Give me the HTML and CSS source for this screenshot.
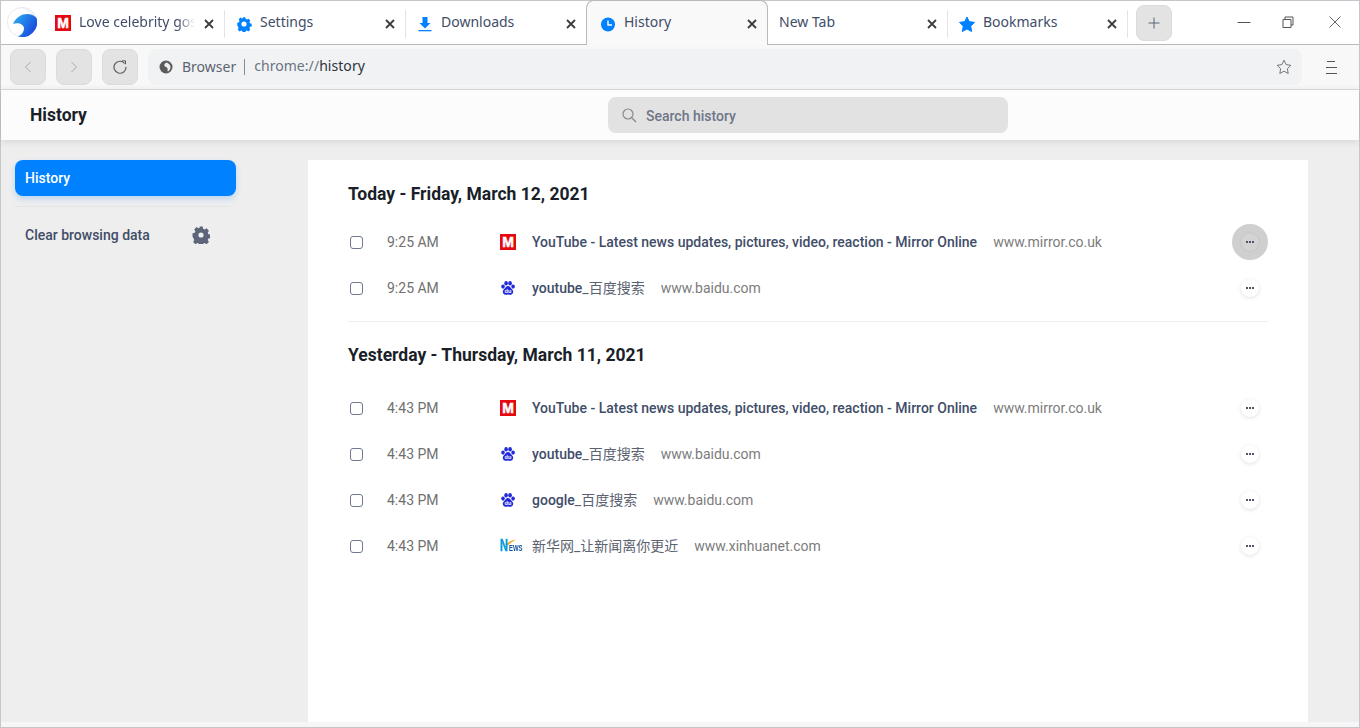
FILE: index.html
```html
<!doctype html>
<html>
<head>
<meta charset="utf-8">
<title>History</title>
<link rel="stylesheet" href="styles.css">
</head>
<body>
<div class="window">
	<div class="tabbar">
		<div class="logo">
			<svg width="30" height="30" viewBox="0 0 30 30">
				<defs>
					<radialGradient id="lg" cx="0.4" cy="0.5" r="0.6"><stop offset="0.7" stop-color="#fff"/><stop offset="1" stop-color="#e6e9f1"/></radialGradient>
					<linearGradient id="lb" x1="0" y1="0" x2="1" y2="0.6"><stop offset="0" stop-color="#2fb4f6"/><stop offset="1" stop-color="#1848dc"/></linearGradient>
				</defs>
				<circle cx="15" cy="15" r="14.600" fill="url(#lg)" stroke="#e2e5ed" stroke-width="0.800"/>
				<path d="M6 17C9 10 15 7 20 7C24 7 27 8.500 29.600 11A15 15 0 0 1 11 29.500C14 28.500 17 25 17 21.500C17 17 11 15 6 17Z" fill="url(#lb)"/>
			</svg>
		</div>
		<div class="tab">
			<span class="fav-mirror fav-left">M</span>
			<span class="tab-title tab-fade">Love celebrity gossip</span>
			<span class="tab-close"><svg width="10" height="10" viewBox="0 0 10 10"><path d="M1 1L9 9M9 1L1 9"/></svg></span>
		</div>
		<div class="tab">
			<svg class="fav" width="16" height="16" viewBox="0 0 16 16"><path d="M6.500 0.500h3l.4 2 1.300.6 1.800-1 2 2.100-1 1.800.6 1.300 1.900.4v3l-1.900.4-.6 1.300 1 1.800-2 2-1.800-1-1.300.6-.4 1.900h-3l-.4-1.900-1.300-.6-1.800 1-2-2 1-1.800-.6-1.300L.500 9.500v-3l1.900-.4.6-1.300-1-1.800 2-2.100 1.800 1 1.300-.6z" fill="#0081ff" transform="translate(0.800 0.800) scale(0.9)"/><circle cx="8" cy="8" r="2.600" fill="#fff"/></svg>
			<span class="tab-title">Settings</span>
			<span class="tab-close"><svg width="10" height="10" viewBox="0 0 10 10"><path d="M1 1L9 9M9 1L1 9"/></svg></span>
		</div>
		<div class="tab">
			<svg class="fav" width="16" height="16" viewBox="0 0 16 16"><path d="M5.500 1h5v6h3L8 12.500 2.500 7h3z" fill="#0081ff"/><rect x="1.500" y="14" width="13" height="1.300" fill="#0081ff"/></svg>
			<span class="tab-title">Downloads</span>
			<span class="tab-close"><svg width="10" height="10" viewBox="0 0 10 10"><path d="M1 1L9 9M9 1L1 9"/></svg></span>
		</div>
		<div class="tab tab-active">
			<svg class="fav" width="16" height="16" viewBox="0 0 16 16"><circle cx="8" cy="8.500" r="7" fill="#0081ff"/><path d="M8 4.500V9H12" fill="none" stroke="#fff" stroke-width="1.400"/></svg>
			<span class="tab-title">History</span>
			<span class="tab-close"><svg width="10" height="10" viewBox="0 0 10 10"><path d="M1 1L9 9M9 1L1 9"/></svg></span>
		</div>
		<div class="tab tab-narrow">
			<span class="tab-title">New Tab</span>
			<span class="tab-close"><svg width="10" height="10" viewBox="0 0 10 10"><path d="M1 1L9 9M9 1L1 9"/></svg></span>
		</div>
		<div class="tab tab-narrow">
			<svg class="fav" width="16" height="16" viewBox="0 0 16 16"><path d="M8 1l2.200 4.600 5.300.8-3.800 3.700 1 5.400L8 13l-4.700 2.500 1-5.400L.500 6.400l5.300-.8z" fill="#0081ff" stroke="#0081ff" stroke-linejoin="round"/></svg>
			<span class="tab-title">Bookmarks</span>
			<span class="tab-close"><svg width="10" height="10" viewBox="0 0 10 10"><path d="M1 1L9 9M9 1L1 9"/></svg></span>
		</div>
		<div class="new-tab">
			<svg width="12" height="12" viewBox="0 0 12 12"><path d="M6 0.500V11.500M0.500 6H11.500" stroke="#56657a" fill="none"/></svg>
		</div>
		<div class="win-btns">
			<svg width="14" height="14" viewBox="0 0 14 14"><path d="M0.500 7.500H13.500" stroke="#555" fill="none"/></svg>
			<svg width="12" height="12" viewBox="0 0 12 12"><path d="M1 3.500H9V11.500H1ZM3 3V1H11V9H9" stroke="#555" fill="none"/></svg>
			<svg class="win-close" width="12" height="12" viewBox="0 0 12 12"><path d="M0.500 0.500L11.500 11.500M11.500 0.500L0.500 11.500" stroke="#666" fill="none"/></svg>
		</div>
	</div>

	<div class="toolbar">
		<div class="nav-btn"><svg width="8" height="12" viewBox="0 0 8 12"><path d="M6.500 1L1.500 6L6.500 11" stroke="#a9a9a9" fill="none"/></svg></div>
		<div class="nav-btn"><svg width="8" height="12" viewBox="0 0 8 12"><path d="M1.500 1L6.500 6L1.500 11" stroke="#a9a9a9" fill="none"/></svg></div>
		<div class="nav-btn"><svg width="14" height="14" viewBox="0 0 14 14"><path d="M11.700 3.500A6 6 0 1 0 13 7" stroke="#5c5c5c" stroke-width="1.200" fill="none"/><path d="M9 0.800L12.500 0.800L12.500 4.300" stroke="#5c5c5c" fill="none"/></svg></div>
		<div class="address">
			<svg class="globe" width="14" height="14" viewBox="0 0 14 14"><circle cx="7" cy="7" r="6.500" fill="#5b5b5b"/><path d="M7.500 2.500C9.500 3 11.700 5 11.500 7.500C11.300 9.500 10 11 8.800 11.500C8 10 9.200 9.300 8.300 8C7.400 6.900 5.500 7 5.300 5.300C5.200 4 6.400 3 7.500 2.500Z" fill="#fff" opacity="0.9"/></svg>
			<span class="addr-label">Browser</span>
			<span class="addr-sep"></span>
			<span class="addr-url">chrome://<b>history</b></span>
			<svg class="addr-star" width="16" height="16" viewBox="0 0 16 16"><path d="M8 1.200l2.100 4.400 4.800.7-3.500 3.400.8 4.800L8 12.200l-4.200 2.300.8-4.800L1.100 6.300l4.800-.7z" stroke="#777" fill="none" stroke-linejoin="round"/></svg>
		</div>
		<div class="menu-btn"><span class="short"></span><span></span><span></span></div>
	</div>

	<div class="page-head">
		<div class="page-title">History</div>
		<div class="search">
			<svg width="15" height="15" viewBox="0 0 15 15"><circle cx="6" cy="6" r="5" stroke="#8a8a8a" stroke-width="1.200" fill="none"/><path d="M9.700 9.700L14 14" stroke="#8a8a8a" stroke-width="1.300"/></svg>
			<span class="search-text">Search history</span>
		</div>
	</div>

	<div class="body">
		<div class="side">
			<div class="side-active">History</div>
			<div class="side-line"></div>
			<div class="side-item">
				<span>Clear browsing data</span>
				<svg width="18" height="18" viewBox="0 0 16 16"><path d="M6.500 0.500h3l.4 2 1.300.6 1.800-1 2 2.100-1 1.800.6 1.300 1.900.4v3l-1.900.4-.6 1.300 1 1.800-2 2-1.800-1-1.300.6-.4 1.900h-3l-.4-1.900-1.300-.6-1.800 1-2-2 1-1.800-.6-1.300L.500 9.500v-3l1.900-.4.6-1.300-1-1.800 2-2.100 1.800 1 1.300-.6z" fill="#5d6579"/><circle cx="8" cy="8" r="2.300" fill="#eee"/></svg>
			</div>
		</div>

		<div class="card">
			<h2 class="day">Today - Friday, March 12, 2021</h2>
			<div class="rows">
				<div class="row">
					<span class="check"></span><span class="time">9:25 AM</span>
					<span class="fav-mirror">M</span>
					<span class="row-title">YouTube - Latest news updates, pictures, video, reaction - Mirror Online</span>
					<span class="row-url">www.mirror.co.uk</span>
					<span class="more-wrap more-hover"><span class="more"><i></i><i></i><i></i></span></span>
				</div>
				<div class="row">
					<span class="check"></span><span class="time">9:25 AM</span>
					<svg class="paw" width="16" height="16" viewBox="-0.500 -0.500 17 17"><use href="#paw"/></svg>
					<span class="row-title">youtube<em>_百度搜索</em></span>
					<span class="row-url">www.baidu.com</span>
					<span class="more-wrap"><span class="more"><i></i><i></i><i></i></span></span>
				</div>
			</div>
			<div class="day-line"></div>
			<h2 class="day day-next">Yesterday - Thursday, March 11, 2021</h2>
			<div class="rows rows-next">
				<div class="row">
					<span class="check"></span><span class="time">4:43 PM</span>
					<span class="fav-mirror">M</span>
					<span class="row-title">YouTube - Latest news updates, pictures, video, reaction - Mirror Online</span>
					<span class="row-url">www.mirror.co.uk</span>
					<span class="more-wrap"><span class="more"><i></i><i></i><i></i></span></span>
				</div>
				<div class="row">
					<span class="check"></span><span class="time">4:43 PM</span>
					<svg class="paw" width="16" height="16" viewBox="-0.500 -0.500 17 17"><use href="#paw"/></svg>
					<span class="row-title">youtube<em>_百度搜索</em></span>
					<span class="row-url">www.baidu.com</span>
					<span class="more-wrap"><span class="more"><i></i><i></i><i></i></span></span>
				</div>
				<div class="row">
					<span class="check"></span><span class="time">4:43 PM</span>
					<svg class="paw" width="16" height="16" viewBox="-0.500 -0.500 17 17"><use href="#paw"/></svg>
					<span class="row-title">google<em>_百度搜索</em></span>
					<span class="row-url">www.baidu.com</span>
					<span class="more-wrap"><span class="more"><i></i><i></i><i></i></span></span>
				</div>
				<div class="row">
					<span class="check"></span><span class="time">4:43 PM</span>
					<span class="fav-news"><svg class="news-arc" width="16" height="7" viewBox="0 0 16 7"><path d="M5 6C8 3 12 1 16 0.500C13 2.500 10 4 8 6.500Z" fill="#f5a623"/></svg><b>N</b><span>EWS</span></span>
					<span class="row-title"><em>新华网_让新闻离你更近</em></span>
					<span class="row-url">www.xinhuanet.com</span>
					<span class="more-wrap"><span class="more"><i></i><i></i><i></i></span></span>
				</div>
			</div>
		</div>
	</div>
	<div class="foot"></div>
</div>

<svg width="0" height="0" class="defs">
	<defs>
		<g id="paw" fill="#2229d8">
			<ellipse cx="2.700" cy="6.500" rx="1.900" ry="2.300"/>
			<ellipse cx="6" cy="3" rx="1.900" ry="2.400"/>
			<ellipse cx="10.200" cy="3" rx="1.900" ry="2.400"/>
			<ellipse cx="13.400" cy="6.500" rx="1.900" ry="2.300"/>
			<path d="M8 6C10 6 10.500 8 12.200 9.300C14.500 11 13.800 15.300 10.500 15.300C9.500 15.300 9 14.900 8 14.900C7 14.900 6.500 15.300 5.500 15.300C2.200 15.300 1.500 11 3.800 9.300C5.500 8 6 6 8 6Z"/>
			<text x="8" y="13.800" text-anchor="middle" fill="#fff" font-family="Liberation Sans" font-weight="700" font-size="6">du</text>
		</g>
	</defs>
</svg>
</body>
</html>
```

FILE: styles.css
```css
* {margin:0; padding:0; box-sizing:border-box;}

html, body {height:100%; overflow:hidden;}
body {font-family:"Roboto", "Noto Sans CJK SC", sans-serif; font-size:14px; color:#414d68; background:#eee;}

.defs {position:absolute;}

.window {height:728px; display:flex; flex-direction:column; border:1px solid #c3c6ca; background:#eee;}

/* tabs */
.tabbar {height:44px; flex:none; display:flex; align-items:stretch; background:#fff; border-bottom:1px solid #b9b9b9; font-family:"Noto Sans", "Noto Sans CJK SC", sans-serif;}
.logo {width:43px; flex:none; display:flex; align-items:center; padding:0 0 2px 6px;}

.tab {width:181px; flex:none; display:flex; align-items:center; padding:0 10px 0 11px; position:relative; color:#414d68;}
.tab::after {content:""; position:absolute; right:0; top:9px; width:1px; height:28px; background:#e3e3e3;}
.tab:nth-child(4)::after, .tab-active::after {display:none;}
.tab-active {width:182px; height:45px; margin:-1px 0 0 -1px; background:#f9f9f9; border:1px solid #b9b9b9; border-bottom:0; border-radius:8px 8px 0 0; padding:0 9px 0 13px;}
.tab-narrow {width:180px;}
.fav {flex:none; margin-right:8px; margin-top:2px;}
.tab-title {flex:1; min-width:0; white-space:nowrap; overflow:hidden; font-size:14px; line-height:20px; margin-top:-2px;}
.tab-fade {-webkit-mask-image:linear-gradient(to right, #000 85%, transparent 100%); mask-image:linear-gradient(to right, #000 85%, transparent 100%);}
.tab-close {width:12px; height:12px; flex:none; display:flex; align-items:center; justify-content:center; margin-left:8px; margin-top:2px;}
.tab-close svg path {stroke:#3c3c3c; stroke-width:1.800; fill:none;}

.new-tab {width:36px; height:36px; flex:none; align-self:center; margin-left:8px; background:#e3e3e3; border:1px solid #dcdcdc; border-radius:8px; display:flex; align-items:center; justify-content:center;}
.win-btns {flex:1; display:flex; align-items:center; justify-content:flex-end; gap:31px; padding:0 18px 0 0; margin-top:-1px;}
.win-close {margin-left:4px;}

/* toolbar */
.toolbar {height:45px; flex:none; display:flex; align-items:center; gap:10px; padding:0 9px 0 9px; background:#f8f8f8; border-bottom:1px solid #dedede;}
.nav-btn {width:36px; height:36px; flex:none; background:#e3e3e3; border:1px solid #dcdcdc; border-radius:8px; display:flex; align-items:center; justify-content:center;}
.address {width:1154px; height:36px; flex:none; background:#f1f2f4; border-radius:8px; display:flex; align-items:center; padding:0 10px 0 11px; font-family:"Noto Sans", sans-serif; font-size:14px; color:#5a6472;}
.globe {flex:none; margin-right:9px;}
.addr-label {color:#5c6470; margin-top:-2px;}
.addr-sep {width:1px; height:16px; background:#8a8a8a; margin:0 9px 0 8px;}
.addr-url {flex:1; color:#6b7280; letter-spacing:0.05px; margin-top:-4px;}
.addr-url b {font-weight:400; color:#2c3340;}
.addr-star {flex:none;}
.menu-btn {width:12px; margin-left:13px; display:flex; flex-direction:column; gap:5px; align-items:center;}
.menu-btn span {width:11px; height:1px; background:#555;}
.menu-btn .short {width:8px;}

/* page head */
.page-head {height:50px; flex:none; display:flex; align-items:center; background:#fcfcfc; box-shadow:0 1px 8px rgba(0,0,0,0.12); position:relative; padding-left:29px;}
.page-title {width:578px; flex:none; font-size:17.5px; font-weight:700; color:#1a1f29;}
.search {width:400px; height:36px; background:#e2e2e2; border-radius:8px; display:flex; align-items:center; gap:9px; padding-left:14px; font-weight:500; color:#6e7688;}
.search-text {margin-top:2px;}

/* body */
.body {flex:1; min-height:0; display:flex; padding-top:20px;}
.side {width:307px; flex:none; padding-left:14px;}
.side-active {width:221px; height:36px; background:#0081ff; border-radius:8px; color:#fff; font-weight:500; line-height:36px; padding-left:10px; box-shadow:0 3px 6px rgba(0,129,255,0.22);}
.side-line {width:214px; height:1px; background:#e4e4e4; margin-top:10px;}
.side-item {width:195px; height:36px; margin-top:10px; display:flex; align-items:center; justify-content:space-between; padding-left:10px; font-weight:500; color:#414d68;}

.card {width:1000px; flex:none; background:#fff; padding:0 40px;}
.day {font-size:17.5px; font-weight:700; color:#1a1f29; line-height:24px; padding-top:22px;}
.day-next {padding-top:21px;}
.rows {margin-top:13px;}
.rows-next {margin-top:18px;}
.row {height:46px; display:flex; align-items:center; color:#5b6270;}
.check {width:13px; height:13px; flex:none; margin-left:2px; border:1px solid #6f7a90; border-radius:3px; background:#fff;}
.time {width:137px; flex:none; padding-left:24px; color:#707070;}
.fav-mirror {width:16px; height:16px; flex:none; border:2px solid #e5090f; background:#e5090f; color:#fff; font:900 14px/12px "Liberation Sans", sans-serif; -webkit-text-stroke:0.5px #fff; text-align:center; overflow:hidden;}
.fav-left {margin-right:8px;}
.paw {flex:none;}
.fav-news {width:17px; height:14px; flex:none; display:flex; align-items:flex-end; position:relative; margin-right:-1px; white-space:nowrap;}
.news-arc {position:absolute; left:0; top:0;}
.fav-news b {font:700 16px/14px "Liberation Sans", sans-serif; color:#0a9be0; -webkit-text-stroke:0.4px #0a9be0; transform:scaleX(0.7); transform-origin:left bottom; width:9px;}
.fav-news span {font:700 9px/9px "Liberation Sans", sans-serif; color:#0b4f9e; transform:scaleX(0.66); transform-origin:left bottom;}
.row-title {margin-left:16px; font-weight:500; color:#414d68; white-space:nowrap; line-height:20px;}
.row-title em {font-style:normal; font-weight:400; color:#5b6270;}
.row-url {margin-left:16px; color:#7c7c7c; white-space:nowrap;}
.more-wrap {width:36px; height:36px; flex:none; margin-left:auto; display:flex; align-items:center; justify-content:center; border-radius:50%;}
.more-hover {background:#cfcfcf;}
.more {width:18px; height:18px; border-radius:50%; background:#fff; box-shadow:0 1px 4px rgba(0,0,0,0.12); display:flex; align-items:center; justify-content:center; gap:1px;}
.more-hover .more {background:#d3d3d3; box-shadow:0 0 2px rgba(0,0,0,0.1);}
.more i {width:2px; height:2px; background:#4f566b;}
.day-line {height:1px; background:#efefef; margin-top:10px;}
.foot {height:5px; flex:none; background:#f6f6f6;}
```
